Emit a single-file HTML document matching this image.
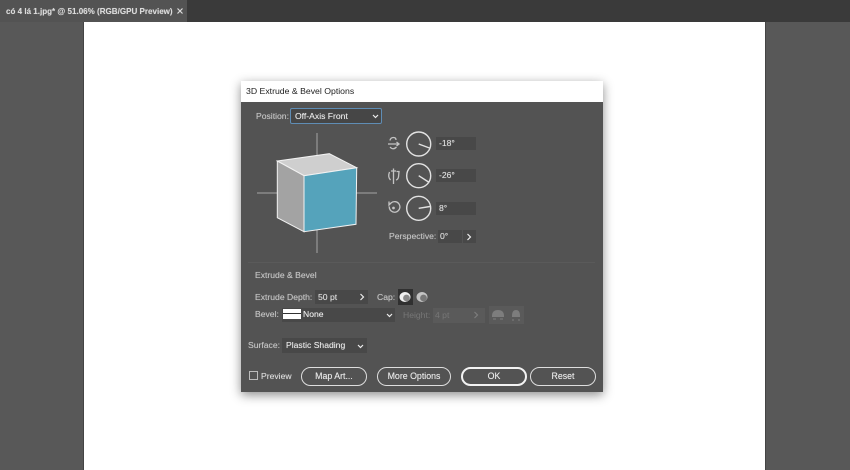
<!DOCTYPE html>
<html><head><meta charset="utf-8">
<style>
html,body{margin:0;padding:0;width:850px;height:470px;overflow:hidden;background:#585858;}
*{box-sizing:border-box;}
.a{position:absolute;}
.t{position:absolute;font-family:"Liberation Sans",sans-serif;font-size:8.6px;white-space:nowrap;line-height:12px;color:#e0e0e0;text-shadow:0 0 .6px rgba(230,230,230,.55);}
.l{color:#c4c4c4;}
.f{position:absolute;background:#484848;}
.btn{position:absolute;border:1.5px solid #dedede;border-radius:10px;height:19px;top:367px;color:#eee;font-family:"Liberation Sans",sans-serif;font-size:8.8px;text-align:center;line-height:16px;text-shadow:0 0 .6px rgba(230,230,230,.55);}
</style></head>
<body>
<div class="a" style="left:0;top:0;width:850px;height:22px;background:#3a3a3a"></div>
<div class="a" style="left:0;top:0;width:187px;height:22px;background:#535353"></div>
<div class="t" style="left:6px;top:6px;font-size:8.05px;color:#dcdcdc;font-weight:bold;">có 4 lá 1.jpg* @ 51.06% (RGB/GPU Preview)</div>
<svg class="a" style="left:176px;top:7px" width="9" height="9"><path d="M1.5 1.5L6.5 6.5M6.5 1.5L1.5 6.5" stroke="#ddd" stroke-width="1.2"/></svg>
<div class="a" style="left:84px;top:22px;width:681px;height:448px;background:#fff"></div>
<div class="a" style="left:765px;top:22px;width:1px;height:448px;background:#444"></div>
<div class="a" style="left:83px;top:22px;width:1px;height:448px;background:#444"></div>

<div class="a" style="left:241px;top:81px;width:362px;height:311px;background:#535353;box-shadow:0 3px 10px rgba(0,0,0,.45)"></div>
<div class="a" style="left:241px;top:81px;width:362px;height:21px;background:#fff;"></div>
<div class="t" style="left:246px;top:85px;color:#222;font-size:8.7px;text-shadow:none;">3D Extrude &amp; Bevel Options</div>

<div class="t l" style="left:256px;top:110px;">Position:</div>
<div class="a" style="left:290px;top:108px;width:92px;height:16px;background:#464646;border:1px solid #5f8db5;border-radius:2px"></div>
<div class="t" style="left:295px;top:110px;color:#eee">Off-Axis Front</div>
<svg class="a" style="left:372px;top:114px" width="7" height="5"><path d="M1 1L3.5 3.5L6 1" stroke="#eee" stroke-width="1.2" fill="none"/></svg>

<svg class="a" style="left:250px;top:125px" width="135" height="135">
<path d="M67 8V128M7 68H127" stroke="#a5a5a5" stroke-width="1"/>
<path d="M27.3 36L79.3 28.7L106.7 42.7L54 50.7Z" fill="#cfcfcf" stroke="#f2f2f2" stroke-width="1"/>
<path d="M27.3 36L54 50.7V106.7L27.3 92.7Z" fill="#a3a3a3" stroke="#f2f2f2" stroke-width="1"/>
<path d="M54 50.7L106.7 42.7L106 99.3L54 106.7Z" fill="#55a3bb" stroke="#f2f2f2" stroke-width="1"/>
</svg>

<svg class="a" style="left:384px;top:130px" width="100" height="92" fill="none">
<g stroke="#e2e2e2" stroke-width="1.4">
<circle cx="34.7" cy="14" r="12"/><path d="M34.7 14L45.5 18"/>
<circle cx="34.7" cy="45.7" r="12"/><path d="M34.7 45.7L44.5 52"/>
<circle cx="34.7" cy="78.3" r="12"/><path d="M34.7 78.3L46 76.5"/>
</g>
<g stroke="#c4c4c4" stroke-width="1.3">
<path d="M4 14H15M12.5 12L15 14L12.5 16M6 10.5Q6.5 7.5 9.5 7.5Q12 7.5 12 10M6 17Q9 20.5 12.5 17"/>
<path d="M9.5 38.5V54M7 41H12M5.5 42Q3.5 47 6.5 50M12.5 41.5H15L14.5 47Q14 49.5 12 50"/>
<path d="M5.3 76.5A5.3 5.3 0 1 0 7 73L5 75V71.5"/>
<circle cx="9.5" cy="78" r=".7"/>
</g>
</svg>

<div class="f" style="left:436px;top:137px;width:40px;height:13px"></div>
<div class="t" style="left:439px;top:137px;">-18°</div>
<div class="f" style="left:436px;top:169px;width:40px;height:13px"></div>
<div class="t" style="left:439px;top:169px;">-26°</div>
<div class="f" style="left:436px;top:202px;width:40px;height:13px"></div>
<div class="t" style="left:439px;top:202px;">8°</div>

<div class="t l" style="left:389px;top:230px;">Perspective:</div>
<div class="f" style="left:438px;top:230px;width:38px;height:13px"></div>
<div class="a" style="left:462px;top:230px;width:1px;height:13px;background:#535353"></div>
<div class="t" style="left:440px;top:230px;">0°</div>
<svg class="a" style="left:466px;top:233px" width="6" height="8"><path d="M1.5 1L4.5 4L1.5 7" stroke="#eee" stroke-width="1.2" fill="none"/></svg>

<div class="a" style="left:248px;top:262px;width:347px;height:1px;background:#5a5a5a"></div>
<div class="t l" style="left:255px;top:269px;">Extrude &amp; Bevel</div>

<div class="t l" style="left:255px;top:291px;">Extrude Depth:</div>
<div class="f" style="left:315px;top:290px;width:53px;height:14px"></div>
<div class="t" style="left:318px;top:291px;">50 pt</div>
<svg class="a" style="left:359px;top:293px" width="6" height="8"><path d="M1.5 1L4.5 4L1.5 7" stroke="#eee" stroke-width="1.2" fill="none"/></svg>
<div class="t l" style="left:377px;top:291px;">Cap:</div>
<svg class="a" style="left:398px;top:289px" width="34" height="16">
<rect x="0" y="0" width="15" height="16" fill="#303030"/>
<ellipse cx="7" cy="8" rx="5.5" ry="5" fill="#f2f2f2"/><circle cx="8.5" cy="9" r="3.4" fill="#8a8a8a"/>
<ellipse cx="24" cy="8" rx="5.5" ry="5" fill="#c4c4c4"/><circle cx="25.5" cy="9" r="3.4" fill="#777"/>
</svg>

<div class="t l" style="left:255px;top:308px;">Bevel:</div>
<div class="a" style="left:282px;top:308px;width:113px;height:14px;background:#484848"></div>
<div class="a" style="left:283px;top:309px;width:18px;height:10px;background:#fff;"></div>
<div class="a" style="left:283px;top:313px;width:18px;height:1px;background:#333"></div>
<div class="t" style="left:303px;top:308px;color:#eee">None</div>
<svg class="a" style="left:386px;top:313px" width="7" height="5"><path d="M1 1L3.5 3.5L6 1" stroke="#eee" stroke-width="1.2" fill="none"/></svg>
<div class="t" style="left:403px;top:309px;color:#777;text-shadow:none">Height:</div>
<div class="a" style="left:433px;top:308px;width:52px;height:15px;background:#5a5a5a"></div>
<div class="t" style="left:435px;top:309px;color:#777;text-shadow:none">4 pt</div>
<svg class="a" style="left:473px;top:311px" width="6" height="8"><path d="M1.5 1L4.5 4L1.5 7" stroke="#7d7d7d" stroke-width="1.2" fill="none"/></svg>
<svg class="a" style="left:489px;top:306px" width="36" height="18">
<rect x="0" y="0" width="35" height="18" fill="#5a5a5a"/>
<path d="M3 10Q3 4 9 4Q15 4 15 10V11H3Z" fill="#7d7d7d"/><path d="M4 13L7 13M11 13L14 13" stroke="#7d7d7d"/>
<path d="M23 10Q23 4 27 4Q31 4 31 10V11H23Z" fill="#7d7d7d"/><path d="M24 13V15M30 13V15" stroke="#7d7d7d"/>
</svg>

<div class="t l" style="left:248px;top:339px;">Surface:</div>
<div class="a" style="left:282px;top:338px;width:85px;height:15px;background:#484848"></div>
<div class="t" style="left:286px;top:339px;color:#eee">Plastic Shading</div>
<svg class="a" style="left:357px;top:344px" width="7" height="5"><path d="M1 1L3.5 3.5L6 1" stroke="#eee" stroke-width="1.2" fill="none"/></svg>

<div class="a" style="left:249px;top:371px;width:9px;height:9px;border:1px solid #bbb"></div>
<div class="t" style="left:261px;top:370px;color:#ddd">Preview</div>

<div class="btn" style="left:301px;width:66px;">Map Art...</div>
<div class="btn" style="left:377px;width:74px;">More Options</div>
<div class="btn" style="left:461px;width:66px;border:2px solid #f2f2f2;line-height:15px;">OK</div>
<div class="btn" style="left:530px;width:66px;">Reset</div>
</body></html>
